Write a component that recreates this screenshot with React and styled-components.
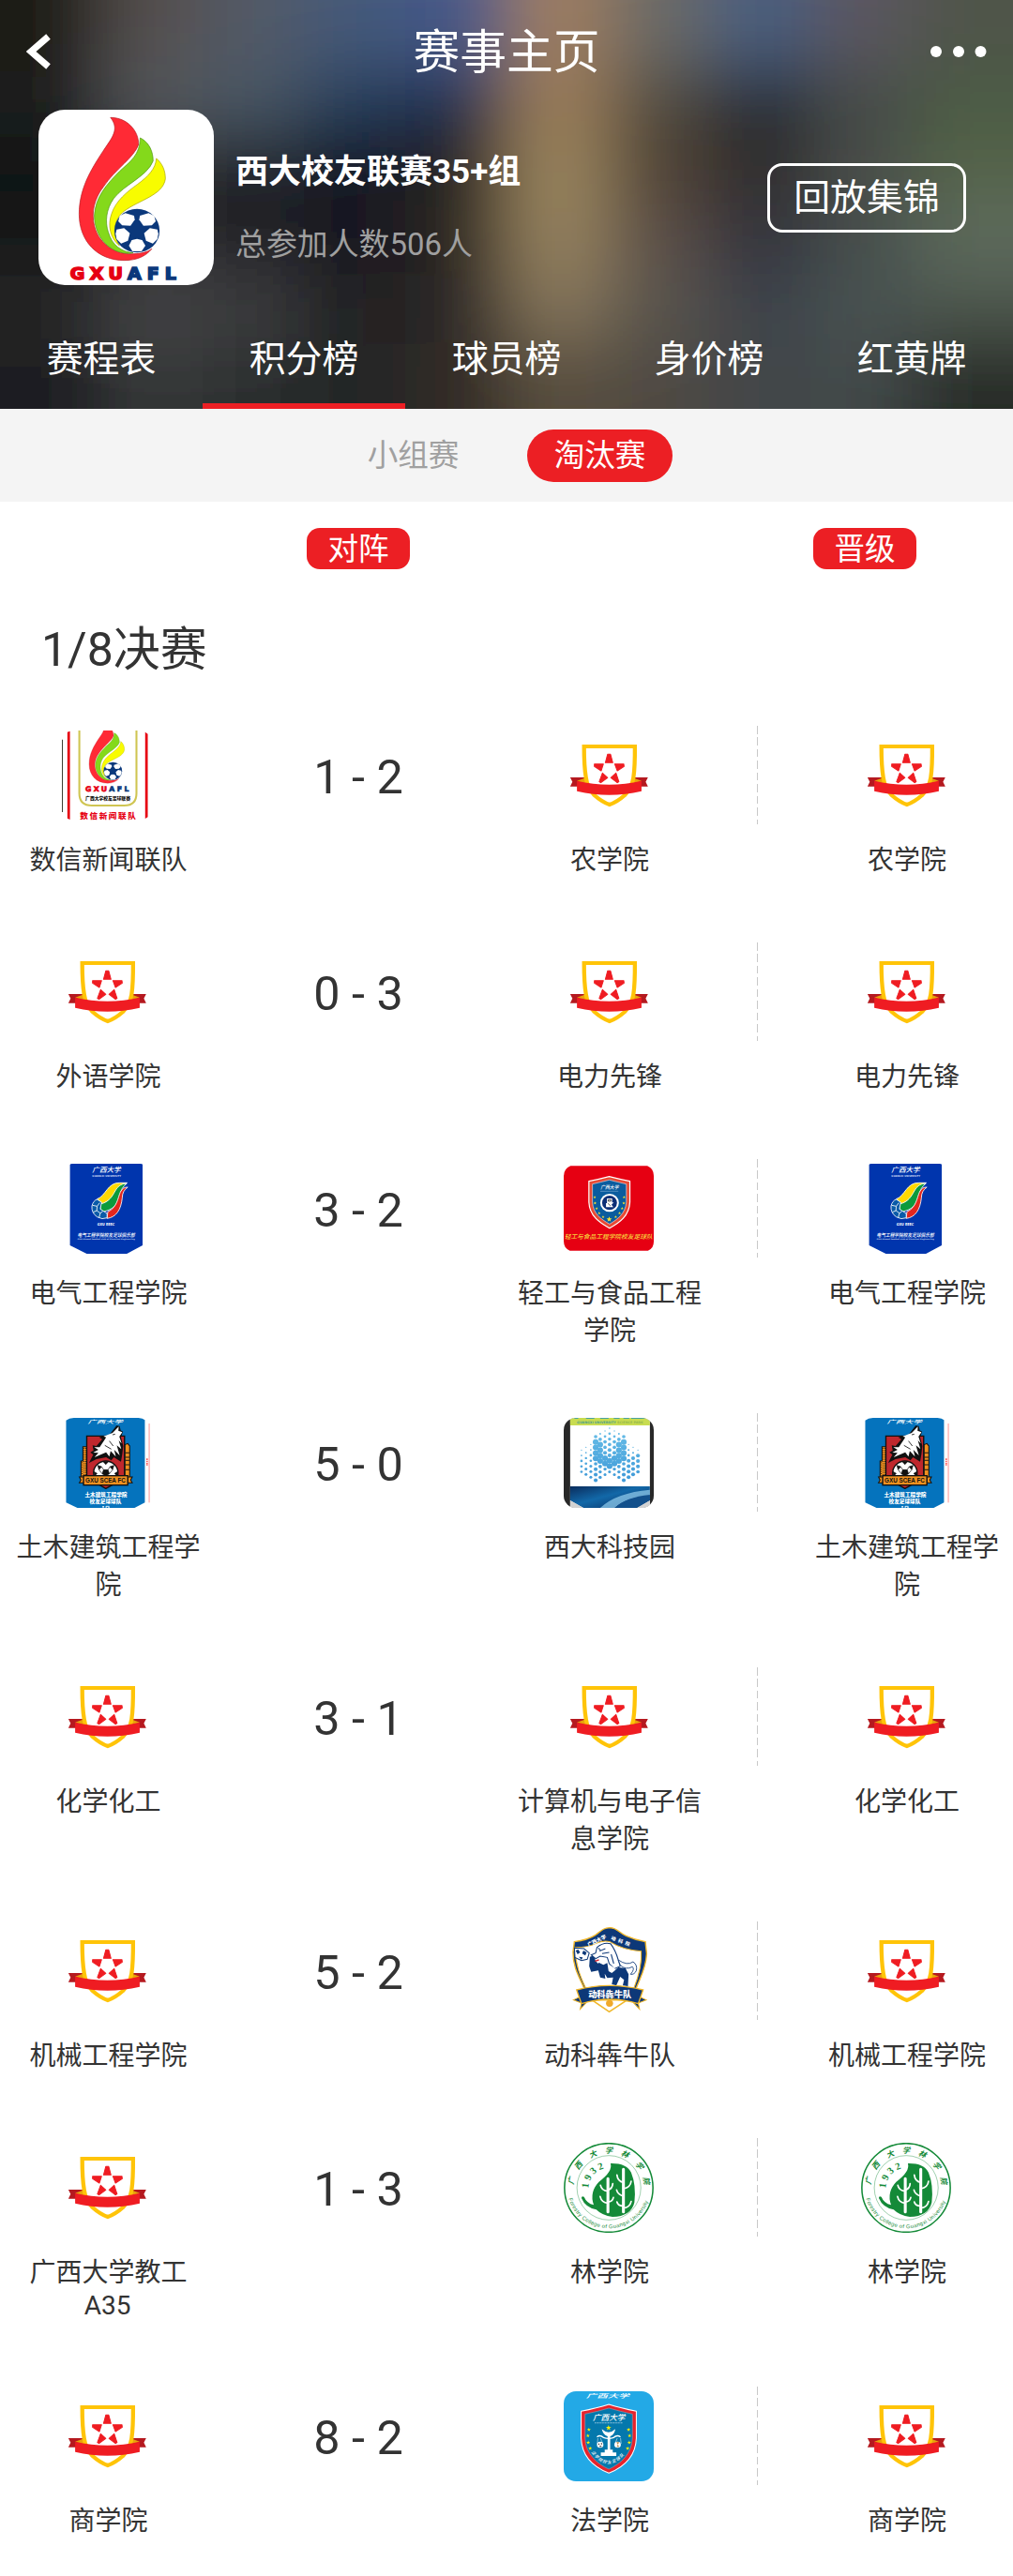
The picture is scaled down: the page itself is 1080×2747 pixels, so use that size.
import React, { useId } from 'react'
//Styling
import styled, { createGlobalStyle } from 'styled-components'

//Data
const tabs = ['赛程表', '积分榜', '球员榜', '身价榜', '红黄牌']

const matches = [
    { home: ['数信新闻联队', 'shuxin'], score: '1 - 2', away: ['农学院'], win: 1 },
    { home: ['外语学院'], score: '0 - 3', away: ['电力先锋'], win: 1 },
    { home: ['电气工程学院', 'dianqi'], score: '3 - 2', away: ['轻工与食品工程学院', 'qinggong'], win: 0 },
    { home: ['土木建筑工程学院', 'tumu'], score: '5 - 0', away: ['西大科技园', 'keji'], win: 0 },
    { home: ['化学化工'], score: '3 - 1', away: ['计算机与电子信息学院'], win: 0 },
    { home: ['机械工程学院'], score: '5 - 2', away: ['动科犇牛队', 'dongke'], win: 0 },
    { home: ['广西大学教工', null, 'A35'], score: '1 - 3', away: ['林学院', 'lin'], win: 1 },
    { home: ['商学院'], score: '8 - 2', away: ['法学院', 'fa'], win: 0 },
]

const backdrop = [
    ['#1f1a18', '#55504e', '#525a66', '#445a7a', '#44588a', '#9f7e61', '#6a6a66', '#4a5e80', '#5c5660', '#4f5548'],
    ['#1d1b1b', '#55595d', '#475765', '#243a58', '#1c2c48', '#9a7b58', '#4f493e', '#23272f', '#424a44', '#4c5c44'],
    ['#111213', '#262728', '#1d1f24', '#12151c', '#26221e', '#9a855f', '#4f4336', '#2d292a', '#4c4e4b', '#556349'],
    ['#131314', '#2b2c2e', '#232427', '#181920', '#2a2724', '#96825f', '#5c5048', '#32333d', '#444d4c', '#5f6c5e'],
    ['#252627', '#464749', '#3c3d40', '#222424', '#2a2825', '#84755c', '#59544e', '#3c424c', '#4a5252', '#4c554c'],
    ['#1e1f20', '#363739', '#2c2d2f', '#232525', '#302c26', '#564d3e', '#504a43', '#42464a', '#434849', '#282a26'],
]

const Backdrop = () => (
    <BackdropSvg viewBox="0 0 1080 436" preserveAspectRatio="none">
        <filter id="soft" x="-10%" y="-10%" width="120%" height="120%">
            <feGaussianBlur stdDeviation="40" />
        </filter>
        <g filter="url(#soft)">
            {backdrop.map((row, r) =>
                row.map((color, c) => (
                    <rect
                        key={`${r}-${c}`}
                        x={c === 0 ? -152 : c * 108}
                        y={r === 0 ? -150 : r * 73}
                        width={c === 0 || c === 9 ? 261 : 109}
                        height={r === 0 ? 224 : r === 5 ? 200 : 74}
                        fill={color}
                    />
                ))
            )}
        </g>
    </BackdropSvg>
)

const Ball = () => (
    <g>
        <circle cx="424" cy="738" r="70" fill="#0b387b" />
        <g fill="#fff">
            <path d="M371 690 L388 682 L415 690 L417 703 L404 722 L378 721 L366 708Z" />
            <path d="M477 690 L460 682 L433 690 L431 703 L444 722 L470 721 L482 708Z" />
            <path d="M361 734 L384 730 L402 746 L396 770 L375 779 L361 765 L358 748Z" />
            <path d="M487 734 L464 730 L446 746 L452 770 L473 779 L487 765 L490 748Z" />
            <path d="M408 768 L424 764 L440 768 L450 786 L438 804 L410 804 L399 786Z" />
        </g>
        <path
            d="M424 700 L434 725 L461 729 L441 745 L448 772 L424 758 L400 772 L407 745 L387 729 L414 725Z"
            fill="#0b387b"
        />
    </g>
)

const Flame = () => (
    <g>
        <path
            d="M342 376 C394 376 429 418 429 462 C415 505 357 540 320 598 C292 635 282 680 292 722 C304 775 350 811 400 812 C432 813 455 808 470 796 C450 822 420 833 385 833 C300 833 245 770 245 685 C245 605 280 545 318 485 C345 442 372 415 342 376Z"
            fill="#ff2a35"
            stroke="#b81720"
            strokeWidth="2"
        />
        <path
            d="M434 441 C462 455 474 485 474 515 C455 565 385 590 352 635 C328 670 325 710 335 742 C347 785 375 805 412 809 C350 820 292 765 292 690 C295 630 330 590 370 548 C405 515 433 495 434 441Z"
            fill="#84d91b"
            stroke="#4f9414"
            strokeWidth="2"
        />
        <path
            d="M484 507 C502 522 512 545 512 572 C505 625 430 640 385 675 C350 702 348 750 370 786 C340 762 333 720 345 685 C358 642 395 612 425 590 C458 565 482 540 484 507Z"
            fill="#f8fc00"
            stroke="#a8a400"
            strokeWidth="2"
        />
        <Ball />
        <FlameText x="217 278 335" y="895" fill="#e60012" stroke="#e60012">
            GXU
        </FlameText>
        <FlameText x="395 455 510" y="895" fill="#0b387b" stroke="#0b387b">
            AFL
        </FlameText>
    </g>
)

const DefaultBadge = () => (
    <Badge viewBox="177 117 279 288" preserveAspectRatio="none">
        <path d="M197 267 H246 V296 H197 L204 281Z M438 267 H390 V296 H438 L431 281Z" fill="#b5191f" />
        <path d="M218 278 L240 270 H396 L418 278 L380 292 H255Z" fill="#e8a30c" />
        <path
            d="M240 168 H397.5 Q398 232 393 268 Q388 300 366 324 Q342 346 319 354 Q296 346 272 324 Q250 300 246 268 Q240 232 240 168Z"
            fill="#fff"
            stroke="#ffc408"
            strokeWidth="12.5"
        />
        <path d="M218 278 Q318 302 418 278 V311 Q318 335 218 311Z" fill="#ef1c22" />
        <g fill="#ef1c22" stroke="#ef1c22" strokeWidth="3" strokeLinejoin="round">
            <path d="M313 193 H322 L329 220 H306Z" />
            <path d="M272 224 H300 L293 246 L272 232Z" />
            <path d="M335 224 H363 L364 232 L343 246Z" />
            <path d="M297 253 L313 268 L292 284 L287 281Z" />
            <path d="M339 253 L323 268 L343 284 L348 281Z" />
        </g>
    </Badge>
)

const ShuxinBadge = () => (
    <Badge viewBox="193 117 279 288" preserveAspectRatio="none">
        <path d="M194.500 146 V378" fill="none" stroke="#3c3f33" strokeWidth="3" />
        <path d="M210 122 L218 119 V402 L210 398Z M451 122 L459 128 V394 L451 399Z" fill="#e60012" />
        <path
            d="M247 112 V318 Q247 357 286 357 H386 Q424 357 424 318 V112"
            fill="none"
            stroke="#cfc552"
            strokeWidth="6"
        />
        <g transform="translate(177 -56) scale(.41)">
            <Flame />
        </g>
        <LogoText x="266" y="338" fontSize="15" textLength="139" fill="#111">
            广西大学校友足球联赛
        </LogoText>
        <LogoText x="249" y="398" fontSize="25" textLength="173" lengthAdjust="spacing" fill="#e60012">
            数信新闻联队
        </LogoText>
    </Badge>
)

const DianqiBadge = () => (
    <Badge viewBox="193 123 279 288" preserveAspectRatio="none">
        <path d="M218 126 Q219 123 225 123 H436 Q443 123 443 126 V384 L394 411 H270 L218 384Z" fill="#0035ad" />
        <ScriptText x="287" y="149" fontSize="22" textLength="88">
            广西大学
        </ScriptText>
        <LogoText x="287" y="164" fontSize="8" textLength="89" fill="#c9d6f2">
            GUANGXI UNIVERSITY
        </LogoText>
        <g stroke="#fff" strokeWidth="2.5" strokeLinejoin="round">
            <path
                d="M302 236 C330 225 334 183 372 184 L395 184 Q372 190 362 210 C350 236 335 242 320 251Z"
                fill="#ffd800"
            />
            <path
                d="M312 252 C340 245 348 228 358 210 Q370 186 394 186 Q376 200 374 222 C366 256 350 270 322 276Q308 270 312 252Z"
                fill="#0b9a3c"
            />
            <path
                d="M335 277 C365 262 366 232 374 214 Q382 197 397 198 Q380 210 380 232 C376 270 362 294 333 298Z"
                fill="#e2261d"
            />
            <path
                d="M302 237 L316 246 L312 268 L333 282 V296 Q318 303 302 293 Q284 280 286 258 Q290 241 302 237Z"
                fill="#0a5ba8"
            />
            <path
                d="M288 256 L302 259 L310 248 M302 259 L301 273 L290 278 M301 273 L312 281 L308 296 M312 281 L320 275"
                fill="none"
            />
        </g>
        <LogoText x="303" y="322" fontSize="12" textLength="53" fill="#fff">
            GXU EEEC
        </LogoText>
        <ScriptText x="241" y="356" fontSize="16" textLength="178">
            电气工程学院校友足球俱乐部
        </ScriptText>
        <LogoText x="241" y="367" fontSize="5.5" textLength="178" fill="#c9d6f2">
            GXU Alumni football club of Electrical Engineering
        </LogoText>
    </Badge>
)

const Star = ({ x, y, r = 6, fill = '#ffe92e' }) => (
    <path
        transform={`translate(${x} ${y}) scale(${r})`}
        d="M0 -1 L.24 -.32 L.95 -.31 L.38 .12 L.59 .81 L0 .4 L-.59 .81 L-.38 .12 L-.95 -.31 L-.24 -.32Z"
        fill={fill}
    />
)

const QinggongBadge = () => (
    <Badge viewBox="177 123 279 288" preserveAspectRatio="none">
        <path
            d="M198 130 H436 Q456 138 456 162 V372 Q456 394 438 401 H196 Q177 394 177 370 V162 Q178 138 198 130Z"
            fill="#e60012"
        />
        <path
            d="M255 179 Q289 172 318 164 Q348 172 382 179 V246 C380 290 350 312 319 329 C288 312 257 290 255 246Z"
            fill="#e84a34"
            stroke="#fff"
            strokeWidth="3.5"
        />
        <path
            d="M266 188 Q292 182 318 175 Q345 182 371 188 V246 C368 282 345 300 319 316 C292 300 268 282 266 246Z"
            fill="#0a5c9e"
            stroke="#fff"
            strokeWidth="1.5"
        />
        <ScriptText x="291" y="205" fontSize="16" textLength="56">
            广西大学
        </ScriptText>
        <path d="M291 211 H346" stroke="#b6d3ea" strokeWidth="2" strokeDasharray="2 1" />
        <circle cx="319" cy="248" r="29" fill="#fff" />
        <circle cx="319" cy="248" r="23" fill="#0c2e75" />
        <path d="M311 234 H327 V247 H332 L325 254 L331 262 H308 V249 H311Z" fill="#fff" />
        <path d="M315 238 H323 V243 H315Z M314 250 L322 258" stroke="#111" strokeWidth="2" fill="none" />
        {[
            [273, 230], [274, 249], [279, 266], [287, 281], [299, 293],
            [364, 230], [363, 249], [358, 266], [350, 281], [338, 293],
        ].map(([x, y]) => (
            <Star key={`${x}${y}`} x={x} y={y} r={5} />
        ))}
        <Star x={318} y={301} r={9} />
        <ScriptText x="179" y="362" fontSize="19" textLength="273" fill="#f7d33a">
            轻工与食品工程学院校友足球队
        </ScriptText>
    </Badge>
)

const TumuBadge = () => (
    <Badge viewBox="193 96 279 288" preserveAspectRatio="none">
        <path d="M206 104 Q215 96 230 96 H430 Q444 97 450 103 V367 L418 384 H241 L206 367Z" fill="#0573bd" />
        <ScriptText x="273" y="114" fontSize="15" textLength="108">
            广西大学
        </ScriptText>
        <path d="M463.500 114 V367" stroke="#ff8080" strokeWidth="2.5" />
        <path d="M457 226 V249" stroke="#ff3b3b" strokeWidth="4" strokeDasharray="5 2" />
        <g fill="#f0901f" stroke="#111" strokeWidth="3">
            <path d="M252 234 H258 V188 H272 V290 H252Z M388 182 L397 178 L403 186 V290 H388Z" />
        </g>
        <path
            d="M262 192 V284 M256 238 V284 M267 192 V284"
            stroke="#111"
            strokeWidth="2.5"
            strokeDasharray="3 4"
        />
        <path d="M389 208 H402 M389 222 H402 M389 232 H402 M389 246 H402 M389 262 H402" stroke="#111" strokeWidth="3" />
        <path d="M270 154 H387 V285 Q370 300 329 322 Q290 300 270 285Z" fill="#bf272d" stroke="#111" strokeWidth="4" />
        <path
            d="M362 121 L372 122 L375 136 L382 140 L376 158 L383 186 L380 212 L376 236 L354 222 L346 232 L330 222 L300 228 L277 240 L290 214 L281 206 L291 200 L288 184 L300 186 L318 164 L308 158 L340 150Z"
            fill="#111"
        />
        <path
            d="M369 124 L368 137 L380 142 L371 156 L378 178 L369 168 L377 196 L363 184 L372 216 L355 198 L360 220 L344 202 L340 220 L330 206 L294 222 L306 208 L290 207 L306 198 L293 190 L310 190 L324 168 L330 158 L322 155 L350 144Z"
            fill="#fff"
        />
        <path d="M340 170 L352 186 M326 184 L346 196 M350 150 L358 148" stroke="#111" strokeWidth="2.5" />
        <circle cx="329" cy="272" r="38" fill="#fff" stroke="#111" strokeWidth="4" />
        <path
            d="M321 236 H337 L329 245Z M304 248 L316 252 L308 262Z M354 248 L342 252 L350 262Z M322 262 L336 262 L340 275 L329 281 L318 275Z M292 268 L302 274 L294 282Z M366 268 L356 274 L364 282Z"
            fill="#111"
            stroke="#111"
            strokeWidth="2"
        />
        <path d="M308 262 L318 275 M350 262 L340 275 M322 262 L316 252 M336 262 L342 252" stroke="#111" strokeWidth="2" />
        <path d="M247 285 H262 V304 H247 L252 295Z M411 285 H396 V304 H411 L406 295Z" fill="#f0901f" stroke="#111" strokeWidth="3" />
        <rect x="260" y="281" width="137" height="30" fill="#f0901f" stroke="#111" strokeWidth="4" />
        <NarrowText x="266" y="303" fontSize="19" textLength="124" lengthAdjust="spacingAndGlyphs">
            GXU SCEA FC
        </NarrowText>
        <LogoText x="264" y="347" fontSize="16" textLength="131" fill="#fff">
            土木建筑工程学院
        </LogoText>
        <LogoText x="279" y="369" fontSize="16" textLength="98" fill="#fff">
            校友足球球队
        </LogoText>
        <path d="M319 380 H324 M321 378 V384 M330 378 V384 M330 379 H340 M336 382 H341" stroke="#fff" strokeWidth="2.500" />
    </Badge>
)

// x, first y, radius of every dot going down
const dots = [
    [232, 199, [2, 2.5, 4, 4, 4]],
    [246, 190, [2, 2.5, 3.5, 4, 4.5, 4.5]],
    [261, 181, [2, 2.5, 4, 4, 4.5, 4.5, 4.5]],
    [276, 156, [5.5, 9, 9, 9, 9, 5.5, 6, 6, 6]],
    [290, 147, [3, 5.5, 9, 9, 9, 9, 5.5, 5, 5]],
    [305, 138, [2, 4, 5.5, 5.5, 6, 9, 9, 5, 4.5]],
    [319, 129, [2.5, 4, 5, 5.5, 6, 6, 9, 9, 4.5]],
    [334, 138, [2, 4, 5.5, 5.5, 6, 9, 9, 5, 4.5]],
    [348, 147, [3, 5.5, 9, 9, 9, 9, 5.5, 5, 5]],
    [363, 156, [5.5, 9, 9, 9, 9, 5.5, 6, 6, 6]],
    [378, 181, [2, 3, 4, 6, 6, 6, 6]],
    [392, 190, [2, 3, 6, 6, 6, 6]],
    [407, 199, [2, 6, 6, 6, 5.5]],
]

const KejiBadge = () => (
    <Badge viewBox="177 96 279 288" preserveAspectRatio="none" $radius>
        <linearGradient id="space" x1="0" y1="0" x2="1" y2="1">
            <stop offset="0" stopColor="#0a2c5c" />
            <stop offset=".45" stopColor="#1268a8" />
            <stop offset="1" stopColor="#0a2a5e" />
        </linearGradient>
        <linearGradient id="dot" x1="0" y1="129" x2="0" y2="295" gradientUnits="userSpaceOnUse">
            <stop offset="0" stopColor="#69bfe8" />
            <stop offset="1" stopColor="#3f9ad8" />
        </linearGradient>
        <rect x="177" y="96" width="279" height="288" fill="#282828" />
        <rect x="197" y="96" width="247" height="288" fill="#fff" />
        <rect x="197" y="96" width="247" height="24" fill="#c8dc50" />
        <path d="M210 97 H222 M246 97 H272 M290 97 H316 M332 97 H350 M362 97 H380 M386 97 H428" stroke="#4aa3a0" strokeWidth="4" />
        <LogoText x="218" y="113" fontSize="10" textLength="121" fill="#4a9c8c">
            GUANGXI UNIVERSITY
        </LogoText>
        <LogoText x="343" y="113" fontSize="10" textLength="80" fill="#94b84c">
            SCIENCE PARK
        </LogoText>
        <g fill="url(#dot)">
            {dots.map(([x, top, radii]) =>
                radii.map((r, i) => <circle key={`${x}-${i}`} cx={x} cy={top + i * 17.4} r={r} />)
            )}
        </g>
        <path d="M197 315 H444 V360 L404 384 H238 L197 360Z" fill="url(#space)" />
        <path d="M290 384 Q340 335 444 326 V346 Q370 350 335 384Z" fill="#8cc8ea" opacity=".75" />
        <path d="M335 384 Q370 350 444 342 V360 L404 384Z" fill="#12508c" />
        <path d="M197 360 L238 384 H197Z M444 360 L404 384 H444Z" fill="#d2d2d2" />
    </Badge>
)

const DongkeBadge = () => (
    <Badge viewBox="177 72 279 288" preserveAspectRatio="none">
        <path
            d="M320 77 C344 78 346 92 370 103 Q398 116 430 122 L434 160 C432 210 412 240 400 275 H242 C228 240 205 205 206 155 L210 122 Q252 116 276 100 C294 86 300 78 320 77Z"
            fill="#0d3878"
            stroke="#f0b72a"
            strokeWidth="4"
        />
        <path
            d="M212 140 Q255 140 275 128 Q300 116 320 122 Q360 148 417 152 C420 195 408 235 394 272 H246 C232 240 213 200 212 140Z"
            fill="#fff"
            stroke="#f0b72a"
            strokeWidth="3"
        />
        <LogoText x="0" y="0" fontSize="16" fill="#fff" transform="translate(254 137) rotate(-26)" textLength="62">
            广西大学
        </LogoText>
        <LogoText
            x="0"
            y="0"
            fontSize="15"
            fill="#fff"
            transform="translate(322 114) rotate(21)"
            textLength="62"
            lengthAdjust="spacing"
        >
            动科院
        </LogoText>
        <path
            d="M210 142 L240 144 L256 158 L250 178 L232 182 L212 172Z"
            fill="#fff"
            stroke="#0d3878"
            strokeWidth="3"
        />
        <path d="M214 150 L222 147 L228 156 L220 162Z M238 150 L248 156 L244 166 L234 160Z M224 170 L236 172 L232 180Z" fill="#0d3878" />
        {/* head, legs and belly */}
        <path
            d="M258 170 L270 166 L276 184 L300 196 L312 190 L316 216 L326 222 L346 204 L368 206 L378 226 L376 264 L360 262 L364 244 L352 234 L340 262 L326 258 L330 236 L312 238 L304 224 L306 240 L290 236 L284 214 L262 218 L256 200Z"
            fill="#0d3878"
        />
        {/* back and hump */}
        <path
            d="M262 164 L276 158 L280 140 Q300 122 322 128 Q338 150 346 180 L352 200 L334 208 L318 192 L312 172 L290 168 L276 176Z"
            fill="#fff"
            stroke="#0d3878"
            strokeWidth="3"
        />
        <path d="M318 196 L336 206 L334 216 L322 218Z M276 184 L290 181 L284 192Z" fill="#fff" />
        <path d="M288 152 L306 144 M296 160 L318 156 M324 162 L332 192 M284 142 L292 150" stroke="#0d3878" strokeWidth="3" fill="none" />
        <path d="M346 180 Q374 200 392 186 Q406 196 402 214 Q396 228 384 226 Q398 210 390 202 Q368 214 352 196Z" fill="#fff" stroke="#0d3878" strokeWidth="2.500" />
        <path d="M274 184 L286 180" stroke="#d8262e" strokeWidth="4" />
        <path d="M264 308 L318 346 L374 308Z" fill="#fff" stroke="#f0b72a" strokeWidth="5" />
        <circle cx="319" cy="319" r="11" fill="#f0a92a" />
        <path d="M207 308 L228 298 L246 318 L228 338 L232 318Z M433 308 L412 298 L394 318 L412 338 L408 318Z" fill="#0d3878" stroke="#f0b72a" strokeWidth="3" />
        <path
            d="M217 276 Q318 248 423 276 L408 320 Q318 292 232 320Z"
            fill="#0d3878"
            stroke="#f0b72a"
            strokeWidth="4"
        />
        <LogoText x="253" y="299" fontSize="27" textLength="134" fill="#fff">
            动科犇牛队
        </LogoText>
    </Badge>
)

const ring = [
    ['广', -79], ['西', -53], ['大', -25], ['学', 0], ['林', 25], ['学', 53], ['院', 79],
]

const LinBadge = () => {
    const id = useId()
    return (
        <Badge viewBox="177 105 279 288" preserveAspectRatio="none">
            <ellipse cx="316.5" cy="249" rx="137" ry="142" fill="#fff" stroke="#148a38" strokeWidth="4.5" />
            <ellipse cx="317" cy="249" rx="99" ry="103" fill="none" stroke="#148a38" strokeWidth="1.200" />
            {ring.map(([char, deg], i) => (
                <ScriptText
                    key={i}
                    x="317"
                    y="139"
                    fontSize="24"
                    textAnchor="middle"
                    fill="#148a38"
                    $heavy
                    transform={`rotate(${deg} 317 249)`}
                >
                    {char}
                </ScriptText>
            ))}
            <path id={id} d="M190 272 A129 129 0 0 0 444 272" fill="none" />
            <RingText fontSize="17" fill="#148a38">
                <textPath href={`#${id}`} startOffset="12" textLength="326">
                    Forestry College of Guangxi University
                </textPath>
            </RingText>
            {['1', '9', '3', '2'].map((n, i) => (
                <SerifText
                    key={n}
                    x="317"
                    y="186"
                    fontSize="31"
                    textAnchor="middle"
                    transform={`rotate(${-84 + i * 21} 317 249)`}
                >
                    {n}
                </SerifText>
            ))}
            <path
                d="M322 171 Q372 170 386 200 Q402 240 396 296 Q386 340 328 342 Q296 338 278 319 Q244 312 232 282 Q232 274 240 278 Q248 298 270 304 Q256 262 286 230 Q330 196 322 171Z"
                fill="#148a38"
            />
            <g fill="none" stroke="#fff" strokeWidth="5" strokeLinecap="round">
                <path d="M314 220 V326 M362 190 V326" strokeWidth="9" />
                <path d="M291 241 Q294 258 314 260 M314 256 Q328 252 329 236 M290 277 Q294 296 314 298 M314 294 Q328 294 331 280" />
                <path d="M342 208 Q344 228 362 232 M362 252 Q384 248 386 228 M341 256 Q344 270 362 276 M342 294 Q344 306 362 308 M362 314 Q382 312 386 293" />
            </g>
        </Badge>
    )
}

const FaBadge = () => (
    <Badge viewBox="177 90 279 288" preserveAspectRatio="none" $radius>
        <rect x="177" y="90" width="279" height="288" fill="#23a9e6" />
        <ScriptText x="246" y="112" fontSize="18" textLength="134">
            广西大学
        </ScriptText>
        <path
            d="M231 154 Q280 144 317 132 Q354 144 402 154 V240 C400 300 360 334 317 352 C273 334 233 300 231 240Z"
            fill="#e8232c"
            stroke="#fff"
            strokeWidth="3"
        />
        <path
            d="M243 163 Q285 154 317 144 Q350 154 390 163 V240 C388 290 354 322 317 339 C280 322 245 290 243 240Z"
            fill="#0478ac"
            stroke="#a8a9b4"
            strokeWidth="1.5"
        />
        <ScriptText x="267" y="182" fontSize="25" textLength="100">
            广西大学
        </ScriptText>
        <path d="M273 191 H360" stroke="#9ccbe2" strokeWidth="3" strokeDasharray="3 1.5" />
        {[
            [255, 213], [252, 232], [253, 254], [259, 273],
            [378, 213], [381, 232], [380, 254], [375, 273],
        ].map(([x, y]) => (
            <Star key={`${x}${y}`} x={x} y={y} r={6.5} fill="#fff200" />
        ))}
        <Star x={316} y={207} r={9} fill="#fff200" />
        <path
            d="M295 211 Q316 232 337 211 Q334 230 321 234 V277 H329 V286 H340 V297 H292 V286 H304 V277 H313 V234 Q299 230 295 211Z"
            fill="#fff"
        />
        <path d="M280 236 Q290 228 300 238 Q316 244 332 238 Q342 228 353 236" fill="none" stroke="#fff" strokeWidth="4" />
        <path d="M283 240 L281 258 M353 240 L355 258 M291 240 L298 258 M343 240 L336 258" stroke="#fff" strokeWidth="1.500" />
        <circle cx="290" cy="261" r="10" fill="#fff" />
        <path d="M286 257 V261 M294 256 V260 M288 266 H294" stroke="#222" strokeWidth="3" />
        <circle cx="344" cy="261" r="10" fill="#fff" />
        <path d="M340 253 H349 L341 268 H349Z" fill="#b48a4a" />
        <path id="faArc" d="M262 284 Q284 320 317 322 Q350 318 374 280" fill="none" />
        <ScriptText fontSize="13">
            <textPath href="#faArc" textLength="126">
                法学院校友足球队
            </textPath>
        </ScriptText>
    </Badge>
)

const badges = {
    shuxin: ShuxinBadge,
    dianqi: DianqiBadge,
    qinggong: QinggongBadge,
    tumu: TumuBadge,
    keji: KejiBadge,
    dongke: DongkeBadge,
    lin: LinBadge,
    fa: FaBadge,
}

const Team = ({ team }) => {
    const [name, badge, suffix] = team
    const TeamBadge = badges[badge] || DefaultBadge
    return (
        <TeamBox>
            <TeamBadge />
            <TeamName>{name}</TeamName>
            {suffix && <TeamSuffix>{suffix}</TeamSuffix>}
        </TeamBox>
    )
}

const App = () => {
    return (
        <>
            <GlobalStyle />
            <Page>
                <Header>
                    <Backdrop />
                    <TopBar>
                        <svg width="27" height="40" viewBox="0 0 27 40">
                            <path d="M23.500 4 L5 20 L23.500 36" fill="none" stroke="#fff" strokeWidth="7" />
                        </svg>
                        <Title>赛事主页</Title>
                        <svg width="60" height="12" viewBox="0 0 60 12" fill="#fff">
                            <circle cx="6" cy="6" r="6" />
                            <circle cx="30" cy="6" r="6" />
                            <circle cx="53.500" cy="6" r="6" />
                        </svg>
                    </TopBar>
                    <Profile>
                        <Logo viewBox="119 351 543 561" preserveAspectRatio="none">
                            <Flame />
                        </Logo>
                        <Info>
                            <h2>西大校友联赛35+组</h2>
                            <p>总参加人数506人</p>
                        </Info>
                        <ReplayButton>回放集锦</ReplayButton>
                    </Profile>
                    <Tabs>
                        {tabs.map((tab) => (
                            <Tab key={tab} $active={tab === '积分榜'}>
                                {tab}
                            </Tab>
                        ))}
                    </Tabs>
                </Header>
                <Stages>
                    <Stage>小组赛</Stage>
                    <Stage $active>淘汰赛</Stage>
                </Stages>
                <Labels>
                    <Label>对阵</Label>
                    <Label>晋级</Label>
                </Labels>
                <Round>1/8决赛</Round>
                {matches.map((match) => (
                    <Match key={match.home[0]}>
                        <Team team={match.home} />
                        <Score>{match.score}</Score>
                        <Team team={match.away} />
                        <Divider />
                        <Team team={match.win ? match.away : match.home} />
                    </Match>
                ))}
            </Page>
        </>
    )
}

const GlobalStyle = createGlobalStyle`
    * {
        margin: 0;
        padding: 0;
        box-sizing: border-box;
    }
    body {
        background: #fff;
        color: #333;
        font-family: Roboto, "Noto Sans CJK SC", sans-serif;
    }
    button {
        font-family: inherit;
        background: none;
        border: none;
    }
`

const Page = styled.div`
    width: 1080px;
    height: 2747px;
    overflow: hidden;
`

const Header = styled.header`
    position: relative;
    height: 436px;
    overflow: hidden;
    color: #fff;
    display: flex;
    flex-direction: column;
    background: #2c2c2c;
`

const BackdropSvg = styled.svg`
    position: absolute;
    top: 0;
    left: 0;
    width: 100%;
    height: 100%;
`

const TopBar = styled.div`
    position: relative;
    flex: none;
    height: 110px;
    padding: 0 28px;
    display: flex;
    align-items: center;
    justify-content: space-between;
`

const Title = styled.h1`
    font-size: 49.8px;
    font-weight: 400;
    line-height: 60px;
    padding: 2px 0 0 33px;
`

const Profile = styled.div`
    position: relative;
    flex: none;
    display: flex;
    align-items: center;
    margin-top: 7px;
    padding: 0 50px 0 41px;
    height: 187px;
`

const Logo = styled.svg`
    width: 187px;
    height: 187px;
    border-radius: 28px;
    background: #fff;
`

const Info = styled.div`
    flex: 1;
    padding: 22px 0 0 23px;
    h2 {
        font-size: 35px;
        line-height: 50px;
        font-weight: 700;
    }
    p {
        margin-top: 28px;
        font-size: 32.9px;
        line-height: 48px;
        color: #a0a0a0;
    }
`

const ReplayButton = styled.button`
    width: 212px;
    height: 74px;
    border: 3px solid #fff;
    border-radius: 16px;
    color: #fff;
    font-size: 38.9px;
    line-height: 67px;
`

const Tabs = styled.nav`
    position: relative;
    flex: none;
    display: flex;
    height: 108px;
    margin-top: 24px;
`

const Tab = styled.div`
    flex: 1;
    text-align: center;
    font-size: 38.9px;
    line-height: 110px;
    height: 108px;
    border-bottom: 6px solid ${(props) => (props.$active ? '#ec1f24' : 'transparent')};
`

const Stages = styled.div`
    height: 99px;
    display: flex;
    align-items: center;
    justify-content: center;
    gap: 44px;
    background: #f4f4f4;
`

const Stage = styled.button`
    width: 155px;
    height: 56px;
    border-radius: 28px;
    font-size: 32.6px;
    line-height: 57px;
    color: ${(props) => (props.$active ? '#fff' : '#a0a0a0')};
    background: ${(props) => (props.$active ? '#ec1f24' : 'none')};
`

const Labels = styled.div`
    display: flex;
    gap: 430px;
    padding: 28px 0 0 327px;
`

const Label = styled.span`
    width: 110px;
    height: 44px;
    border-radius: 14px;
    background: #ec1f24;
    color: #fff;
    font-size: 32.6px;
    line-height: 46px;
    text-align: center;
`

const Round = styled.h3`
    padding: 50px 0 0 44px;
    height: 167px;
    font-size: 50px;
    font-weight: 400;
    line-height: 72px;
`

const Match = styled.div`
    display: grid;
    grid-template-columns: 231px 302px 234px 87px 226px;
    padding-bottom: 67px;
`

const TeamBox = styled.div`
    display: flex;
    flex-direction: column;
    align-items: center;
    padding-top: 5px;
`

const Badge = styled.svg`
    width: 96px;
    height: 96px;
    margin-right: 3px;
    border-radius: ${(props) => (props.$radius ? '13px' : '0')};
`

const TeamName = styled.p`
    width: 200px;
    margin-top: 23px;
    font-size: 28px;
    line-height: 40px;
    text-align: center;
`

const TeamSuffix = styled.p`
    margin: -2px 2px 2px 0;
    font-size: 28px;
    line-height: 34px;
`

const Score = styled.div`
    font-size: 50.4px;
    line-height: 60px;
    padding-top: 25px;
    text-align: center;
`

const Divider = styled.div`
    width: 1px;
    height: 105px;
    margin-left: 40px;
    background: repeating-linear-gradient(#c8c8c8 0 8.6px, transparent 8.6px 12.45px);
`

//Lettering inside the badges
const LogoText = styled.text.attrs((props) => ({ lengthAdjust: props.lengthAdjust || 'spacingAndGlyphs' }))`
    font-family: 'DejaVu Sans', 'Noto Sans CJK SC', sans-serif;
    font-weight: 900;
`

const FlameText = styled.text`
    font-family: 'DejaVu Sans', sans-serif;
    font-size: 55px;
    font-weight: 700;
    stroke-width: 5px;
`

const ScriptText = styled.text.attrs((props) => ({
    fill: props.fill || '#fff',
    lengthAdjust: 'spacingAndGlyphs',
}))`
    font-family: 'Noto Sans CJK SC', sans-serif;
    font-weight: ${(props) => (props.$heavy ? 700 : 500)};
    font-style: italic;
`

const NarrowText = styled.text`
    font-family: 'Liberation Sans', sans-serif;
    font-weight: 700;
    fill: #111;
`

const RingText = styled.text`
    font-family: 'Liberation Sans', sans-serif;
`

const SerifText = styled.text`
    font-family: 'Liberation Serif', serif;
    font-weight: 700;
    fill: #148a38;
`

export default App
